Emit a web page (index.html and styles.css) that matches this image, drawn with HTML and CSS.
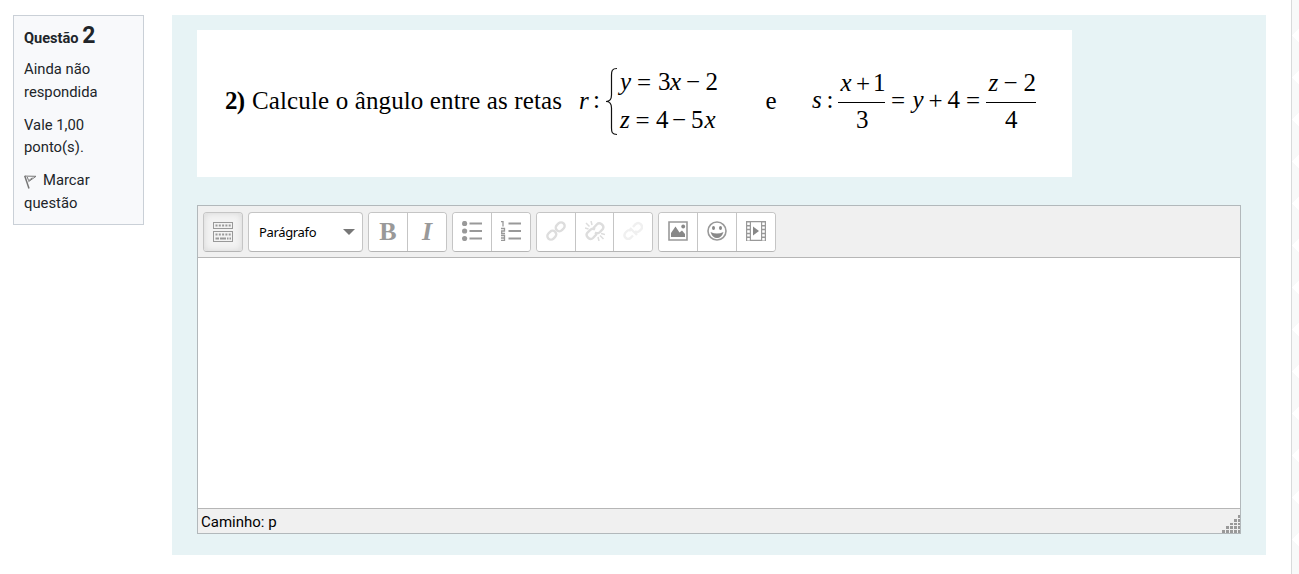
FILE: index.html
```html
<!DOCTYPE html>
<html lang="pt-BR">
<head>
<meta charset="utf-8">
<title>Questão 2</title>
<link rel="stylesheet" href="styles.css">
</head>
<body>
<div class="page">
  <aside class="info">
    <h3 class="qtitle">Questão <span class="qno">2</span></h3>
    <p class="state">Ainda não respondida</p>
    <p class="grade">Vale 1,00 ponto(s).</p>
    <p class="flagline"><svg class="flag" width="13" height="14" viewBox="0 0 13 14" fill="none" stroke="#777"><path d="M.7 .8L5 13.500" stroke-width="1.500"/><path d="M1 1.100L12 1.300L4.500 6.700M3.200 2L4.700 5.700L8.400 2.700" stroke-width="1"/></svg>Marcar questão</p>
  </aside>
  <main class="formulation">
    <section class="question">
      <svg class="equation" width="875" height="147" viewBox="197 30 875 147">
        <text x="225" y="109" textLength="20" class="b">2)</text>
        <text x="252" y="109" textLength="310">Calcule o ângulo entre as retas</text>
        <text x="579" y="109" class="i">r</text><text x="593" y="108">:</text>
        <path d="M617 68.500C612 68.500 611.500 71 611.500 75V95C611.500 99 610 101.500 606 101.500C610 101.500 611.500 104 611.500 108V128C611.500 132 612 134.500 617 134.500" fill="none" stroke="#111" stroke-width="1.200"/>
        <text x="620" y="90" class="i">y</text><text x="637" y="91">=</text><text x="658" y="90">3</text><text x="670" y="90" class="i">x</text><text x="686" y="90">−</text><text x="705.500" y="90">2</text>
        <text x="620" y="128" class="i">z</text><text x="635.500" y="129">=</text><text x="656" y="128">4</text><text x="672" y="128">−</text><text x="691" y="128">5</text><text x="704.500" y="128" class="i">x</text>
        <text x="765.500" y="109">e</text>
        <text x="812" y="108" class="i">s</text><text x="826.500" y="108">:</text>
        <text x="840.500" y="91" class="i">x</text><text x="856" y="92">+</text><text x="873" y="91">1</text><path d="M838 102.500H885M986 102.500H1036" stroke="#000"/><text x="856" y="128">3</text>
        <text x="891" y="109">=</text><text x="912.500" y="108" class="i">y</text><text x="928.500" y="109">+</text><text x="947.500" y="108">4</text><text x="966" y="109">=</text>
        <text x="988.500" y="91" class="i">z</text><text x="1003.500" y="91">−</text><text x="1023.500" y="91">2</text><text x="1005" y="128">4</text>
      </svg>
    </section>
    <section class="editor">
      <div class="toolbar">
        <div class="group"><button class="btn active"><svg width="20" height="20" fill="#999"><path fill-rule="evenodd" d="M0 0H20V7H0ZM1 1V6H19V1ZM0 9H20V20H0ZM1 10V19H19V10Z"/><path d="M2.500 3.500H18M2.500 12.500H18" stroke="#999" stroke-width="2" stroke-dasharray="2 1.300"/><path d="M2.500 16.500H6M7 16.500H13M14 16.500H15.500M16.500 16.500H18" stroke="#999" stroke-width="2"/></svg></button></div>
        <div class="group select"><span class="format">Parágrafo</span><i class="caret"></i></div>
        <div class="group">
          <button class="btn glyph bold">B</button>
          <button class="btn glyph ital">I</button>
        </div>
        <div class="group">
          <button class="btn"><svg width="20" height="20"><g fill="#999"><circle cx="2.600" cy="2.500" r="2.600"/><circle cx="2.600" cy="10" r="2.600"/><circle cx="2.600" cy="17.500" r="2.600"/></g><path d="M7.500 2.500H20M7.500 10H20M7.500 17.500H20" stroke="#999" stroke-width="2"/></svg></button>
          <button class="btn"><svg width="20" height="20" fill="none" stroke="#999"><path d="M7.500 2.500H20M7.500 10H20M7.500 17.500H20" stroke-width="2"/><path d="M0 .7H2V5.500M0 7.500H3.500V10H.7V12.500H4M0 14.500H3.500V19.500H0M0 17H3.500" stroke-width="1.300"/></svg></button>
        </div>
        <div class="group">
          <button class="btn"><svg width="20" height="20" fill="none" stroke="#ddd" stroke-width="2.400"><rect x="-4.800" y="-3.600" width="9.600" height="7.200" rx="3.600" transform="translate(5.800 14.200) rotate(-45)"/><rect x="-4.800" y="-3.600" width="9.600" height="7.200" rx="3.600" transform="translate(14.200 5.800) rotate(-45)"/></svg></button>
          <button class="btn mid"><svg width="20" height="20" fill="none" stroke="#ddd" stroke-width="2.400"><path d="M8.500 7L12 3.200C14.500 .5 20 4.500 17.800 8L15 11C13.500 12.500 11.500 12.500 10 11.500M10 8.500C8.500 7.500 6.500 7.700 5 9.200L2.200 12C0 15 5 20 8 17L11.500 13.300"/><path d="M6 0L7 4M1 2L4.500 5.500M0 7L3.500 8M13 16L14 20M15 14.500L18.500 18M16 12.500L20 13.500" stroke-width="1.500"/></svg></button>
          <button class="btn"><svg width="20" height="20" fill="none" stroke="#f0f0f0" stroke-width="2.400"><path d="M8 10C6 8 4.500 9.500 3 11C-1 15 4 20 7.500 17L10 14.500M10 6L12.500 3.200C16 0 21 4.500 18 8.500C16 11 14 12 12 10M7 7L14 14"/></svg></button>
        </div>
        <div class="group">
          <button class="btn"><svg width="20" height="20"><path d="M1 1H19V19H1Z" fill="none" stroke="#999" stroke-width="1.600"/><path d="M3 16V12L7.500 5.500L11.500 11.500L14 9.500L17 13V16Z" fill="#888"/><circle cx="15.200" cy="5.500" r="1.900" fill="#888"/></svg></button>
          <button class="btn"><svg width="20" height="20"><circle cx="10" cy="10" r="9" fill="none" stroke="#999" stroke-width="1.600"/><ellipse cx="6.500" cy="7" rx="1.500" ry="2" fill="#888"/><ellipse cx="13.500" cy="7" rx="1.500" ry="2" fill="#888"/><path d="M3.500 11Q10 14 16.500 11Q14.500 17 10 17Q5.500 17 3.500 11Z" fill="#888"/></svg></button>
          <button class="btn"><svg width="20" height="20"><path d="M0 0H5V20H0ZM15 0H20V20H15Z" fill="#999"/><path d="M2.500 1.500V20M17.500 1.500V20" stroke="#fff" stroke-width="2.600" stroke-dasharray="2.400 1.500"/><path d="M5 .6H15M5 19.400H15" stroke="#999" stroke-width="1.200"/><path d="M7 5.500L13 10L7 14.500Z" fill="#888"/></svg></button>
        </div>
      </div>
      <div class="content"></div>
      <div class="status"><span>Caminho: p</span><svg class="grip" width="18" height="18" fill="#999"><path d="M0 15h3v3h-3zM4 15h3v3h-3zM8 15h3v3h-3zM12 15h3v3h-3zM16 15h2v3h-2zM4 11h3v3h-3zM8 11h3v3h-3zM12 11h3v3h-3zM16 11h2v3h-2zM8 8h3v2h-3zM12 8h3v2h-3zM16 8h2v2h-2zM12 4h3v3h-3zM16 4h2v3h-2zM16 0h2v3h-2z"/></svg></div>
    </section>
  </main>
  <div class="edge"></div>
</div>
</body>
</html>
```
FILE: styles.css
```css
* { box-sizing: border-box; }
body { margin: 0; background: #fff; font: 15px/22.5px Roboto, sans-serif; color: #212529; overflow: hidden; }
.page { display: flex; align-items: flex-start; width: 1299px; height: 574px; padding: 15px 0 0 13px; }
.info { width: 131px; height: 210px; flex: none; margin-right: 28px; padding: 8px 10px; border: 1px solid #cad0d7; background: #f8f9fb; }
.info p { margin: 0 0 10.5px; font-size: 14.8px; }
.qtitle { margin: 0 0 8px; font-size: 14.6px; font-weight: 700; line-height: 24px; }
.qno { font-size: 23px; font-weight: 700; line-height: 23px; }
.flag { margin: 0 6px -4px 0; }
.formulation { width: 1094px; height: 540px; flex: none; padding: 15px 25px 21px; background: #e7f3f5; display: flex; flex-direction: column; justify-content: space-between; }
.question { width: 875px; height: 147px; background: #fff; }
.equation { display: block; font: 25px "Liberation Serif", serif; fill: #000; }
.equation .b { font-weight: 700; }
.equation .i { font-style: italic; }
.editor { width: 1044px; height: 329px; border: 1px solid #b2b8bb; display: flex; flex-direction: column; background: #fff; }
.toolbar { height: 52px; display: flex; gap: 5px; padding: 6px 5px; background: #f0f0f0; border-bottom: 1px solid #b6b6b6; }
.group { display: flex; height: 40px; border: 1px solid #c5c5c5; border-bottom-color: #b5b5b5; border-radius: 4px; background: #fff; overflow: hidden; }
.btn { width: 38px; height: 38px; padding: 0; border: 0; background: #fff; display: flex; align-items: center; justify-content: center; }
.btn svg { position: relative; top: -1px; }
.btn + .btn { width: 39px; border-left: 1px solid #c5c5c5; }
.btn + .btn.mid { width: 38px; }
.btn.active { background: #f3f3f3; box-shadow: inset 0 0 7px #d4d4d4; }
.btn.active svg { top: 0; }
.glyph { font: 26px/38px "Liberation Serif", serif; color: #999; }
.bold { font-weight: 700; }
.ital { font-style: italic; font-weight: 700; }
.select { width: 115px; padding: 0 7px 0 10px; align-items: center; justify-content: space-between; }
.format { font: 13px/20px "Noto Sans", sans-serif; letter-spacing: -.35px; color: #000; }
.caret { border: 6px solid transparent; border-top-color: #777; border-bottom: 0; }
.content { flex: 1; }
.status { height: 25px; display: flex; justify-content: space-between; align-items: flex-end; padding-left: 3px; border-top: 1px solid #b6b6b6; background: #f0f0f0; font-size: 15px; line-height: 22px; color: #000; }
.grip { display: block; }
.edge { width: 8px; height: 574px; margin: -15px 0 0 25px; flex: none; border-left: 1px solid #d8dadb; background: repeating-conic-gradient(from 45deg, #f8f9f9 0 25%, #fff 0 50%) 0 -7px / 42px 42px; }
```
